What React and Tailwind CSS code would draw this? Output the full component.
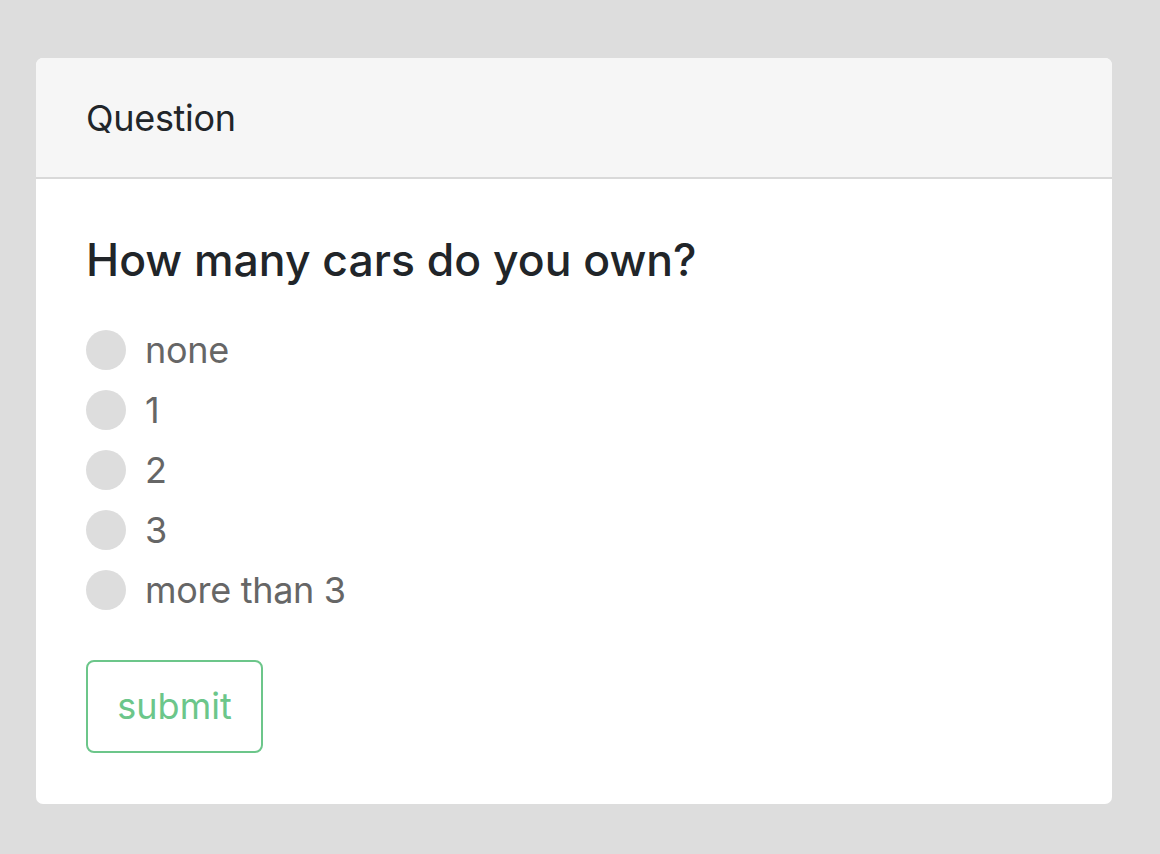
import React from 'react';

const options = ['none', '1', '2', '3', 'more than 3'];

export default function App() {
  return (
    <div className="min-h-[854px] bg-[#dddddd] pt-[58px] px-[36px] pb-[50px] font-['Inter',sans-serif]">
      <div className="w-[1076px] rounded-[7px] bg-white overflow-hidden">
        <div className="h-[121px] bg-[#f6f6f6] border-b-2 border-[#d9d9d9] px-[50px] flex items-center">
          <span className="text-[36px] text-[#212529] tracking-[-0.3px]">Question</span>
        </div>
        <div className="px-[50px] pt-[59px] pb-[51px]">
          <h2 className="text-[44.5px] font-medium text-[#212529] leading-none">How many cars do you own?</h2>
          <div className="mt-[37px] flex flex-col">
            {options.map((o) => (
              <label key={o} className="h-[60px] flex items-center gap-[19px]">
                <span className="w-[40px] h-[40px] rounded-full bg-[#dddddd]"></span>
                <span className="text-[36px] text-[#666666] tracking-[-0.3px]">{o}</span>
              </label>
            ))}
          </div>
          <button className="mt-[40px] w-[177px] h-[93px] border-2 border-[#6cc68a] rounded-[8px] text-[36px] text-[#6cc68a]">
            submit
          </button>
        </div>
      </div>
    </div>
  );
}
